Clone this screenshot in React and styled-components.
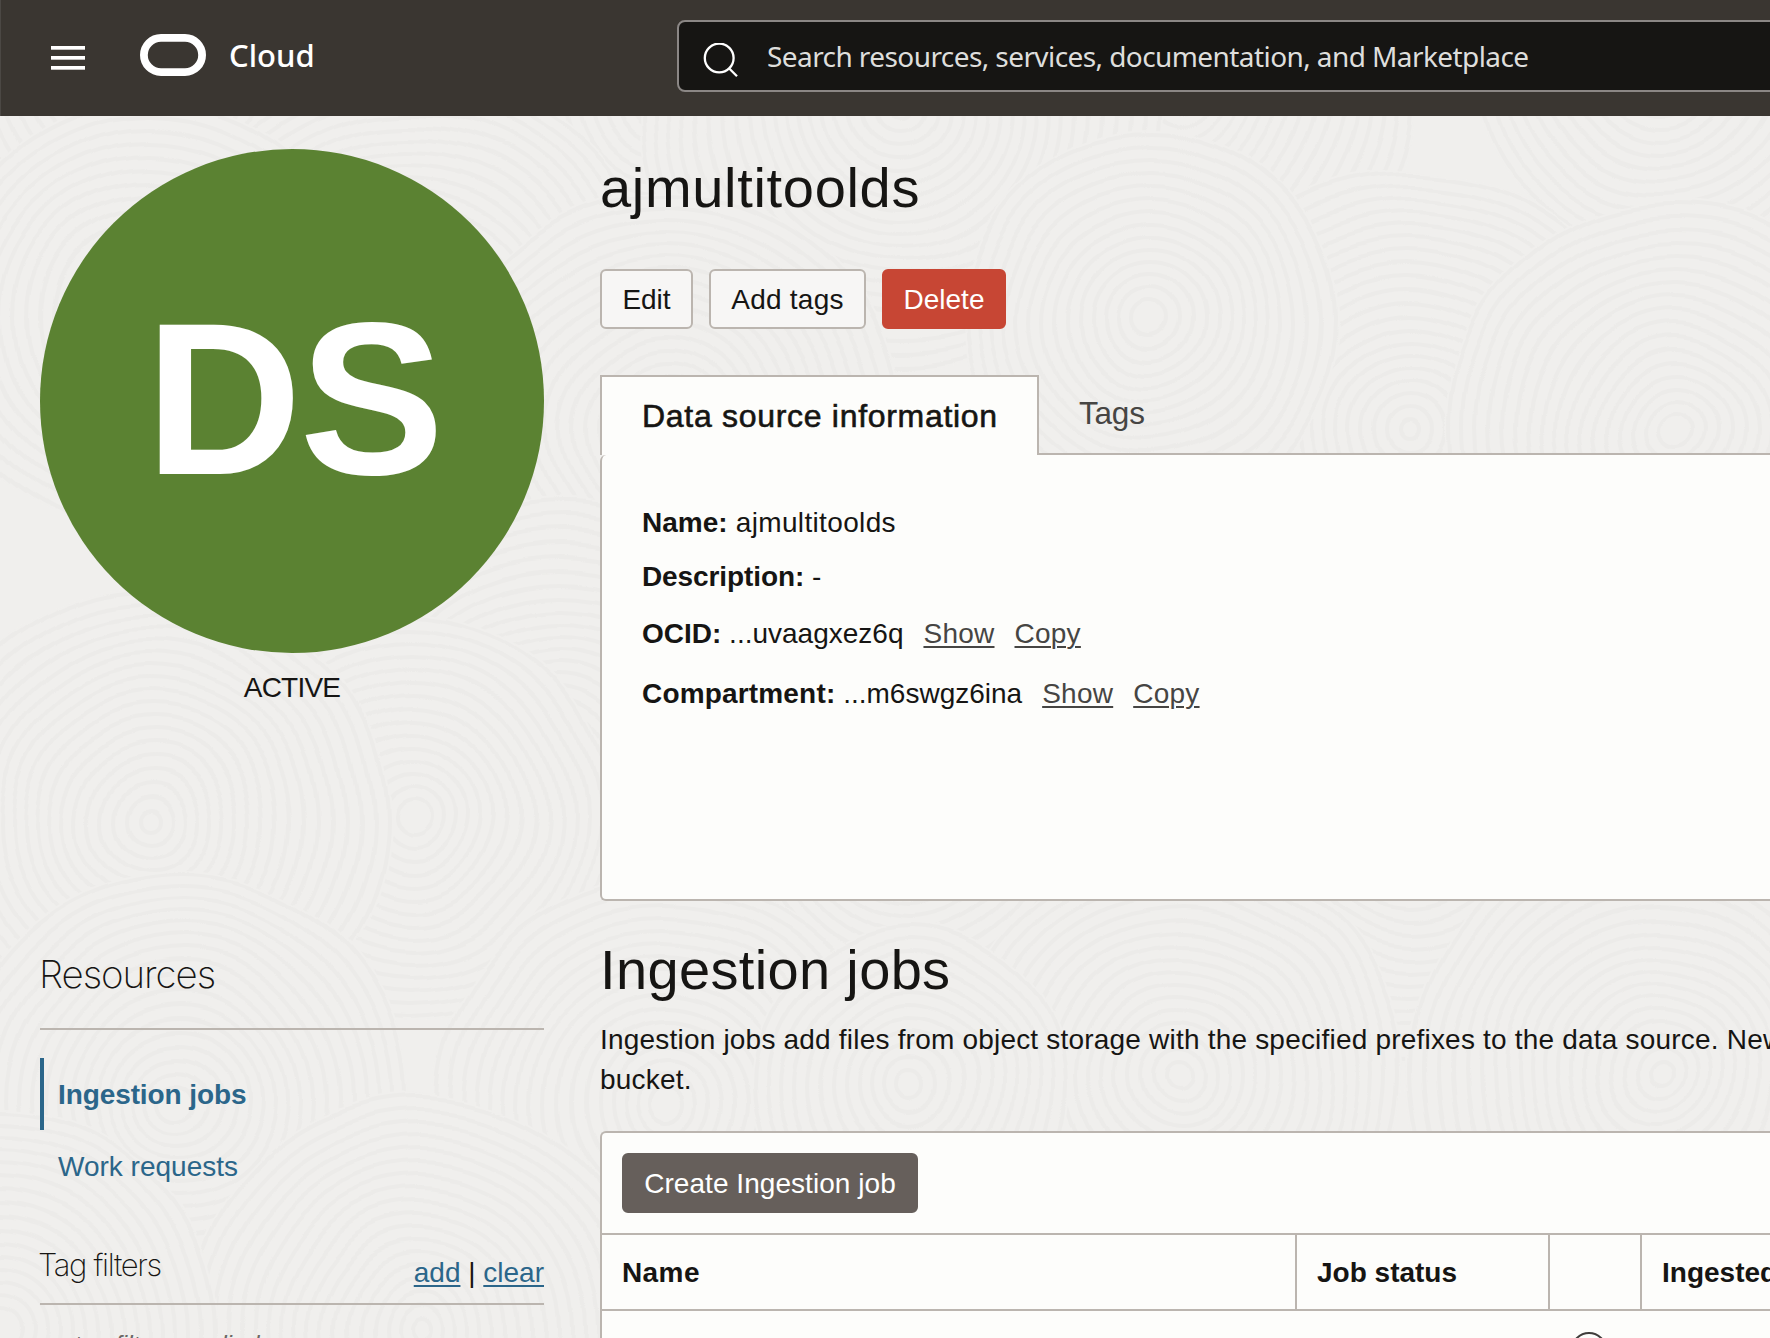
import React from "react";
import styled, { createGlobalStyle, css } from "styled-components";

const sans = `"Liberation Sans", Arial, Helvetica, sans-serif`;
const brand = `"Noto Sans", "Open Sans", sans-serif`;
const ink = "#161513";
const line = "#bbb5af";
const paper = "#fdfdfb";
const canvas = "#f0efed";
const blue = "#2b668a";

const GlobalStyle = createGlobalStyle`
  * { box-sizing: border-box; }
  body { margin: 0; background: ${canvas}; overflow: hidden; }
`;

const Page = styled.div`
  position: relative;
  isolation: isolate;
  width: 100%;
  height: 1338px;
  overflow: hidden;
  display: flex;
  flex-direction: column;
  font: 28px/40px ${sans};
  color: ${ink};
`;

const Texture = styled.svg`
  position: absolute;
  inset: 0;
  z-index: -1;
  width: 100%;
  height: 100%;
`;

const Header = styled.header`
  flex: none;
  display: flex;
  height: 116px;
  background: #3a3631;
  border-left: 1px solid #4b4844;
`;

const MenuButton = styled.button`
  flex: none;
  display: flex;
  flex-direction: column;
  gap: 6px;
  width: 34px;
  height: 24px;
  margin: 46px 0 0 50px;
  padding: 0;
  border: 0;
  background: none;
`;

const MenuBar = styled.span`
  height: 4px;
  background: #fff;
  border-bottom: 1px solid #c4c2c0;
`;

const Brand = styled.div`
  flex: none;
  display: flex;
  width: 592px;
  padding-left: 55px;
`;

const Logo = styled.svg`
  flex: none;
  margin-top: 34px;
`;

const BrandName = styled.span`
  margin: 35px 0 0 23px;
  font: 500 31px/40px ${brand};
  letter-spacing: 0;
  color: #fff;
`;

const SearchBox = styled.div`
  flex: 1;
  display: flex;
  height: 72px;
  margin: 20px -20px 0 0;
  border: 2px solid #8b8785;
  border-radius: 8px;
  background: #161513;
`;

const SearchIcon = styled.svg`
  flex: none;
  margin: 21px 0 0 24px;
`;

const SearchText = styled.span`
  margin: 14px 0 0 29px;
  font: 400 28px/40px ${brand};
  letter-spacing: -0.58px;
  color: #dededc;
  white-space: nowrap;
`;

const Body = styled.div`
  flex: 1;
  min-height: 0;
  display: flex;
  gap: 56px;
  padding-left: 40px;
`;

const Sidebar = styled.aside`
  flex: none;
  width: 504px;
  padding-top: 33px;
`;

const Badge = styled.div`
  display: flex;
  justify-content: center;
  width: 504px;
  height: 504px;
  padding: 125px 0 0 3px;
  border-radius: 50%;
  background: #5b8232;
  color: #fff;
  font: 700 217px/250px ${sans};
  letter-spacing: -2.5px;
`;

const Status = styled.div`
  padding-top: 15px;
  text-align: center;
  letter-spacing: -0.8px;
`;

const thin = css`
  font-family: Inter, Roboto, sans-serif;
  font-weight: 200;
`;

const ResourcesTitle = styled.h2`
  ${thin}
  height: 86px;
  margin: 236px 0 0;
  font-size: 38.5px;
  line-height: 60px;
  letter-spacing: -1.05px;
  text-indent: -1px;
  border-bottom: 2px solid ${line};
`;

const Nav = styled.nav`
  display: flex;
  flex-direction: column;
  padding-top: 28px;
`;

const NavItem = styled.a`
  height: 72px;
  padding: 1px 0 0 14px;
  line-height: 72px;
  color: ${blue};
  border-left: 4px solid ${(p) => (p.$active ? blue : "transparent")};
  font-weight: ${(p) => (p.$active ? 700 : 400)};
  letter-spacing: ${(p) => (p.$active ? "-0.1px" : "0px")};
`;

const FilterHead = styled.div`
  display: flex;
  justify-content: space-between;
  height: 71px;
  margin-top: 32px;
  border-bottom: 2px solid ${line};
`;

const FilterTitle = styled.h3`
  ${thin}
  margin: 11px 0 0;
  font-size: 31px;
  line-height: 40px;
  letter-spacing: -1.35px;
  text-indent: -2px;
`;

const FilterLinks = styled.div`
  margin-top: 19px;
`;

const Link = styled.a`
  color: ${(p) => (p.$muted ? "#464543" : blue)};
  letter-spacing: ${(p) => (p.$muted ? 0.25 : 0)}px;
  text-decoration: underline;
  text-decoration-thickness: 2px;
  text-underline-offset: 3px;
`;

const FilterNote = styled.p`
  margin: 20px 0 0;
  font-size: 24.5px;
  font-style: italic;
  color: #6b6865;
`;

const Main = styled.main`
  flex: 1;
  min-width: 0;
  display: flex;
  flex-direction: column;
`;

const Title = styled.h1`
  margin: ${(p) => p.$top}px 0 0;
  font-size: 56px;
  line-height: 64px;
  font-weight: 400;
  letter-spacing: ${(p) => p.$track}px;
`;

const Actions = styled.div`
  display: flex;
  gap: 16px;
  margin-top: 49px;
`;

const tones = {
  plain: css`
    background: #f7f6f5;
    border: 2px solid ${line};
    color: ${ink};
  `,
  danger: css`
    background: #c74634;
    border: 2px solid #c74634;
    color: #fff;
  `,
  primary: css`
    background: #665f5b;
    border: 2px solid #665f5b;
    color: #fff;
  `,
};

const Button = styled.button`
  width: ${(p) => p.$width}px;
  height: 60px;
  padding: 2px 0 0;
  border-radius: 6px;
  font: 28px/54px ${sans};
  letter-spacing: ${(p) => p.$track || 0}px;
  white-space: nowrap;
  ${(p) => tones[p.$tone]}
`;

const Tabs = styled.div`
  display: flex;
  height: 80px;
  margin-top: 46px;
`;

const ActiveTab = styled.div`
  width: 439px;
  padding: 19px 0 0 40px;
  background: ${paper};
  border: 2px solid ${line};
  border-bottom: 0;
  font-size: 32px;
  letter-spacing: 0.7px;
  white-space: nowrap;
  -webkit-text-stroke: 0.6px ${ink};
`;

const TabRest = styled.div`
  flex: 1;
  padding: 18px 0 0 40px;
  border-bottom: 2px solid ${line};
  font-size: 31.5px;
  letter-spacing: -0.2px;
  color: #464543;
`;

const Info = styled.section`
  height: 446px;
  padding: 48px 0 0 40px;
  background: ${paper};
  border: solid ${line};
  border-width: 0 0 2px 2px;
  border-radius: 6px 0 0 6px;
`;

const InfoRow = styled.div`
  display: flex;
  gap: 20px;
  height: 40px;
  margin-top: ${(p) => p.$gap}px;
  white-space: pre;
`;

const Label = styled.b`
  letter-spacing: ${(p) => p.$track || 0}px;
`;

const Value = styled.span`
  letter-spacing: ${(p) => p.$track || 0}px;
`;

const Blurb = styled.p`
  width: 1400px;
  margin: 18px 0 0;
  letter-spacing: 0.2px;
`;

const TableCard = styled.section`
  flex: 1;
  min-height: 0;
  margin-top: 31px;
  background: ${paper};
  border: solid ${line};
  border-width: 2px 0 0 2px;
  border-radius: 6px 0 0 0;
`;

const Toolbar = styled.div`
  height: 102px;
  padding: 20px;
  border-bottom: 2px solid ${line};
`;

const TableRow = styled.div`
  display: grid;
  grid-template-columns: 693px 253px 92px 1fr;
  height: ${(p) => p.$height}px;
  border-bottom: ${(p) => (p.$ruled ? `2px solid ${line}` : 0)};
`;

const HeadCell = styled.div`
  padding: 18px 0 0 20px;
  font-weight: 700;
  letter-spacing: ${(p) => p.$track || 0}px;
  white-space: nowrap;
  overflow: hidden;
  border-left: ${(p) => (p.$first ? 0 : `2px solid ${line}`)};
`;

const Cell = styled.div`
  padding: 21px 0 0 23px;
`;

const swirls = [
  [1180, 90, 235], [660, 95, 230], [1660, 60, 190], [1410, 430, 260],
  [900, 110, 260], [150, 60, 250], [1675, 430, 230], [410, 330, 260],
  [1150, 320, 190], [665, 430, 240], [150, 320, 220], [560, 760, 260],
  [1410, 817, 250], [910, 820, 260], [410, 817, 205], [152, 820, 235],
  [1658, 1073, 250], [1180, 1075, 225], [665, 1105, 230], [910, 1085, 160],
  [180, 1100, 230], [420, 1330, 235], [0, 1330, 220],
];

function Swirls() {
  return (
    <Texture viewBox="0 0 1770 1338" aria-hidden="true">
      <filter id="wavy" x="0" y="0" width="1770" height="1338" filterUnits="userSpaceOnUse">
        <feTurbulence type="fractalNoise" baseFrequency="0.009" numOctaves="1" seed="4" />
        <feDisplacementMap in="SourceGraphic" scale="26" xChannelSelector="R" yChannelSelector="G" />
      </filter>
      <g filter="url(#wavy)">
        {swirls.map(([cx, cy, r], i) => (
          <g key={i} fill="none" stroke="#ecebe9" strokeWidth="4">
            <circle cx={cx} cy={cy} r={r} fill={canvas} stroke="none" />
            {Array.from({ length: Math.floor(r / 13) }, (_, k) => (
              <circle key={k} cx={cx} cy={cy} r={r - k * 13 - 4} />
            ))}
          </g>
        ))}
      </g>
    </Texture>
  );
}

export default function App() {
  return (
    <>
      <GlobalStyle />
      <Page>
        <Swirls />
        <Header>
          <MenuButton aria-label="Menu">
            <MenuBar />
            <MenuBar />
            <MenuBar />
          </MenuButton>
          <Brand>
            <Logo width="66" height="42" viewBox="0 0 66 42">
              <rect x="3.9" y="3.9" width="58.2" height="34.2" rx="17.1" fill="none" stroke="#fff" strokeWidth="7.8" />
            </Logo>
            <BrandName>Cloud</BrandName>
          </Brand>
          <SearchBox>
            <SearchIcon width="35" height="36" viewBox="0 0 35 36" fill="none" stroke="#fff" strokeWidth="2.3">
              <circle cx="16.2" cy="15" r="14.4" />
              <path d="M26 25.2L34 33.2" />
            </SearchIcon>
            <SearchText>Search resources, services, documentation, and Marketplace</SearchText>
          </SearchBox>
        </Header>
        <Body>
          <Sidebar>
            <Badge>DS</Badge>
            <Status>ACTIVE</Status>
            <ResourcesTitle>Resources</ResourcesTitle>
            <Nav>
              <NavItem $active>Ingestion jobs</NavItem>
              <NavItem>Work requests</NavItem>
            </Nav>
            <FilterHead>
              <FilterTitle>Tag filters</FilterTitle>
              <FilterLinks>
                <Link>add</Link> | <Link>clear</Link>
              </FilterLinks>
            </FilterHead>
            <FilterNote>no tag filters applied</FilterNote>
          </Sidebar>
          <Main>
            <Title $top={40} $track={0.68}>ajmultitoolds</Title>
            <Actions>
              <Button $tone="plain" $width={93}>Edit</Button>
              <Button $tone="plain" $width={157} $track={0.25}>Add tags</Button>
              <Button $tone="danger" $width={124}>Delete</Button>
            </Actions>
            <Tabs>
              <ActiveTab>Data source information</ActiveTab>
              <TabRest>Tags</TabRest>
            </Tabs>
            <Info>
              <InfoRow $gap={0}>
                <Value $track={0.35}><Label>Name:</Label> ajmultitoolds</Value>
              </InfoRow>
              <InfoRow $gap={14}>
                <Value><Label $track={-0.1}>Description:</Label> -</Value>
              </InfoRow>
              <InfoRow $gap={17}>
                <Value><Label>OCID:</Label> ...uvaagxez6q</Value>
                <Link $muted>Show</Link>
                <Link $muted>Copy</Link>
              </InfoRow>
              <InfoRow $gap={20}>
                <Value><Label $track={0.17}>Compartment:</Label> ...m6swgz6ina</Value>
                <Link $muted>Show</Link>
                <Link $muted>Copy</Link>
              </InfoRow>
            </Info>
            <Title $top={37} $track={0.35}>Ingestion jobs</Title>
            <Blurb>
              Ingestion jobs add files from object storage with the specified prefixes to the data source. New files in the bucket.
            </Blurb>
            <TableCard>
              <Toolbar>
                <Button $tone="primary" $width={296} $track={0.05}>Create Ingestion job</Button>
              </Toolbar>
              <TableRow $height={76} $ruled>
                <HeadCell $first $track={0.4}>Name</HeadCell>
                <HeadCell>Job status</HeadCell>
                <HeadCell />
                <HeadCell>Ingested files</HeadCell>
              </TableRow>
              <TableRow $height={100}>
                <Cell />
                <Cell />
                <Cell>
                  <svg width="36" height="36" viewBox="0 0 36 36">
                    <circle cx="18" cy="18" r="17" fill="none" stroke="#3f3d3b" strokeWidth="2" />
                  </svg>
                </Cell>
              </TableRow>
            </TableCard>
          </Main>
        </Body>
      </Page>
    </>
  );
}
